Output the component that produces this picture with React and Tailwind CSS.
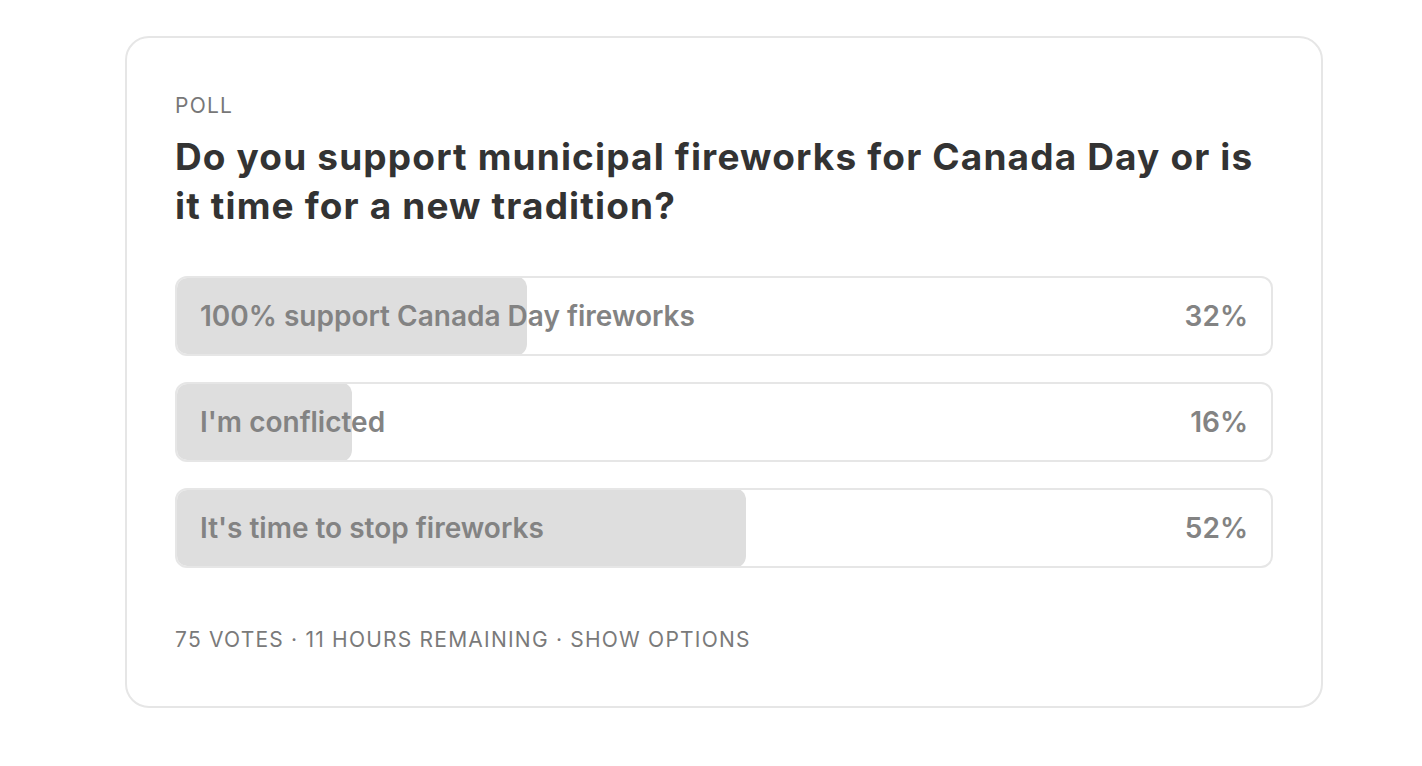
const options = [
  { label: "100% support Canada Day fireworks", pct: 32 },
  { label: "I'm conflicted", pct: 16 },
  { label: "It's time to stop fireworks", pct: 52 },
];

export default function App() {
  return (
    <div className="min-h-screen bg-white pt-[36px] pl-[125px]" style={{ fontFamily: "Inter, 'Noto Sans', sans-serif" }}>
      <div className="w-[1198px] h-[672px] border-2 border-[#e6e6e6] rounded-[24px] px-[48px] pt-[54px]">
        <div className="text-[21px] leading-[28px] tracking-[0.06em] text-[#777777]">POLL</div>
        <h2 className="mt-[12px] text-[37px] leading-[49px] font-bold text-[#333333] tracking-[0.031em]">
          Do you support municipal fireworks for Canada Day or is it time for a new tradition?
        </h2>
        <div className="mt-[46px] flex flex-col gap-[26px]">
          {options.map((o) => (
            <div
              key={o.label}
              className="relative h-[80px] rounded-[12px] border-2 border-[#e6e6e6] overflow-hidden"
            >
              <div
                className="absolute -left-[2px] -top-[2px] -bottom-[2px] bg-[#dedede] rounded-[12px]"
                style={{ width: `calc(${o.pct}% + 2px)` }}
              />
              <div className="relative h-full flex items-center justify-between px-[23px] text-[28px] font-semibold text-[#838383]">
                <span>{o.label}</span>
                <span>{o.pct}%</span>
              </div>
            </div>
          ))}
        </div>
        <div className="mt-[58px] text-[21px] leading-[28px] tracking-[0.058em] text-[#7a7a7a]">
          75 VOTES · 11 HOURS REMAINING · SHOW OPTIONS
        </div>
      </div>
    </div>
  );
}
